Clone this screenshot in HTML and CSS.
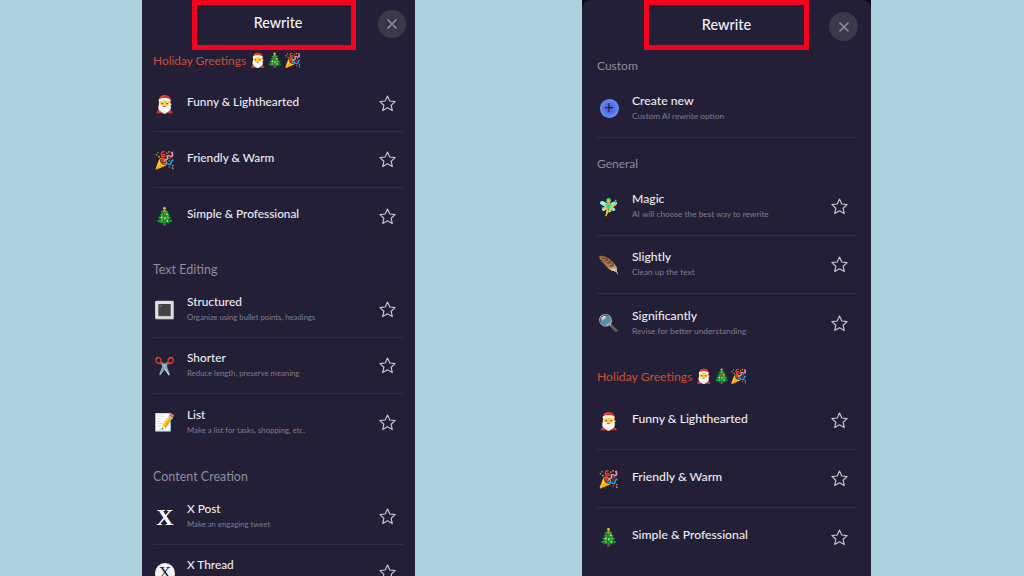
FILE: index.html
```html
<!DOCTYPE html>
<html lang="en">
<head>
  <meta charset="UTF-8">
  <title>Rewrite</title>
  <link rel="stylesheet" href="styles.css">
</head>
<body>
  <svg class="sprite" width="0" height="0">
    <symbol id="star" viewBox="0 0 24 24">
      <path d="M12 2.6l2.9 6.2 6.7.8-5 4.6 1.4 6.7-6-3.4-6 3.4 1.4-6.7-5-4.6 6.7-.8z" fill="none" stroke="currentColor" stroke-width="1.5" stroke-linejoin="round"/>
    </symbol>
    <symbol id="close" viewBox="0 0 12 12">
      <path d="M1.5 1.5l9 9M10.5 1.5l-9 9" fill="none" stroke="currentColor" stroke-width="1.6"/>
    </symbol>
  </svg>

  <!-- Left sheet -->
  <section class="sheet sheet-left">
    <header class="sheet-header">
      <h1 class="sheet-title">Rewrite</h1>
      <button class="close-button"><svg class="close-icon"><use href="#close"/></svg></button>
    </header>

    <h2 class="group-title group-title-holiday first">Holiday Greetings <span class="emoji">🎅🎄🎉</span></h2>
    <ul class="menu">
      <li class="menu-item"><span class="item-icon">🎅</span><div class="item-text"><div class="item-name">Funny &amp; Lighthearted</div></div><svg class="star"><use href="#star"/></svg></li>
      <li class="menu-item"><span class="item-icon">🎉</span><div class="item-text"><div class="item-name">Friendly &amp; Warm</div></div><svg class="star"><use href="#star"/></svg></li>
      <li class="menu-item last"><span class="item-icon">🎄</span><div class="item-text"><div class="item-name">Simple &amp; Professional</div></div><svg class="star"><use href="#star"/></svg></li>
    </ul>

    <h2 class="group-title">Text Editing</h2>
    <ul class="menu">
      <li class="menu-item"><span class="item-icon">🔳</span><div class="item-text"><div class="item-name">Structured</div><div class="item-desc">Organize using bullet points, headings</div></div><svg class="star"><use href="#star"/></svg></li>
      <li class="menu-item"><span class="item-icon">✂️</span><div class="item-text"><div class="item-name">Shorter</div><div class="item-desc">Reduce length, preserve meaning</div></div><svg class="star"><use href="#star"/></svg></li>
      <li class="menu-item last"><span class="item-icon">📝</span><div class="item-text"><div class="item-name">List</div><div class="item-desc">Make a list for tasks, shopping, etc.</div></div><svg class="star"><use href="#star"/></svg></li>
    </ul>

    <h2 class="group-title group-title-content">Content Creation</h2>
    <ul class="menu">
      <li class="menu-item"><span class="item-icon x-icon">X</span><div class="item-text"><div class="item-name">X Post</div><div class="item-desc">Make an engaging tweet</div></div><svg class="star"><use href="#star"/></svg></li>
      <li class="menu-item"><span class="item-icon"><span class="thread-icon">X</span></span><div class="item-text"><div class="item-name">X Thread</div><div class="item-desc"></div></div><svg class="star"><use href="#star"/></svg></li>
    </ul>
  </section>

  <!-- Right sheet, black phone edge shows behind its round corners -->
  <div class="sheet-frame">
    <section class="sheet sheet-right">
      <header class="sheet-header">
        <h1 class="sheet-title">Rewrite</h1>
        <button class="close-button"><svg class="close-icon"><use href="#close"/></svg></button>
      </header>

      <h2 class="group-title first">Custom</h2>
      <ul class="menu">
        <li class="menu-item"><span class="item-icon"><span class="plus-icon">+</span></span><div class="item-text"><div class="item-name">Create new</div><div class="item-desc">Custom AI rewrite option</div></div></li>
      </ul>

      <h2 class="group-title">General</h2>
      <ul class="menu">
        <li class="menu-item"><span class="item-icon">🧚‍♂️</span><div class="item-text"><div class="item-name">Magic</div><div class="item-desc">AI will choose the best way to rewrite</div></div><svg class="star"><use href="#star"/></svg></li>
        <li class="menu-item"><span class="item-icon">🪶</span><div class="item-text"><div class="item-name">Slightly</div><div class="item-desc">Clean up the text</div></div><svg class="star"><use href="#star"/></svg></li>
        <li class="menu-item last"><span class="item-icon">🔍</span><div class="item-text"><div class="item-name">Significantly</div><div class="item-desc">Revise for better understanding</div></div><svg class="star"><use href="#star"/></svg></li>
      </ul>

      <h2 class="group-title group-title-holiday">Holiday Greetings <span class="emoji">🎅🎄🎉</span></h2>
      <ul class="menu">
        <li class="menu-item"><span class="item-icon">🎅</span><div class="item-text"><div class="item-name">Funny &amp; Lighthearted</div></div><svg class="star"><use href="#star"/></svg></li>
        <li class="menu-item"><span class="item-icon">🎉</span><div class="item-text"><div class="item-name">Friendly &amp; Warm</div></div><svg class="star"><use href="#star"/></svg></li>
        <li class="menu-item last"><span class="item-icon">🎄</span><div class="item-text"><div class="item-name">Simple &amp; Professional</div></div><svg class="star"><use href="#star"/></svg></li>
      </ul>
    </section>
  </div>
</body>
</html>
```
FILE: styles.css
```css
* {
  box-sizing: border-box;
}
body {
  margin: 0;
  height: 576px;
  overflow: hidden;
  display: flex;
  align-items: flex-start;
  background-color: #aed1df;
  font-family: "Lato", "Noto Color Emoji", sans-serif;
}
.sprite {
  display: block;
  width: 0;
  height: 0;
}
h1,
h2,
ul {
  margin: 0;
  padding: 0;
  font-weight: normal;
}
ul {
  list-style: none;
}

.sheet {
  height: 576px;
  overflow: hidden;
  flex: none;
  background-color: #231f36;
}
.sheet-left {
  --row: 56px;
  --name-size: 11.8px;
  --desc-size: 7.75px;
  --group-size: 12.5px;
  --holiday-size: 11.9px;
  width: 273px;
  margin-left: 142px;
  padding: 0 11px;
}
.sheet-frame {
  flex: none;
  width: 289px;
  height: 576px;
  margin-left: 167px;
  background-color: #0d0b14;
}
.sheet-right {
  --row: 58px;
  --name-size: 12.2px;
  --desc-size: 8.3px;
  --group-size: 12px;
  --holiday-size: 12.2px;
  padding: 0 15px;
  border-radius: 9px 9px 0 0;
}

.sheet-header {
  height: 50px;
  display: flex;
  align-items: flex-start;
}
.sheet-title {
  flex: none;
  border: 5px solid #f5001e;
  width: 164px;
  height: 50px;
  margin-left: 39px;
  padding: 9px 0 0 8px;
  text-align: center;
  color: #f4f3f6;
  font-size: 14.3px;
  font-weight: 500;
}
.sheet-right .sheet-title {
  width: 165px;
  margin-left: 47px;
  padding: 11px 0 0;
  font-size: 14.5px;
}
.close-button {
  flex: none;
  margin: 10px 0 0 22px;
  width: 28px;
  height: 28px;
  padding: 0;
  border: none;
  border-radius: 50%;
  background-color: #3b3849;
  color: #8d8b97;
  display: flex;
  align-items: center;
  justify-content: center;
}
.sheet-right .close-button {
  margin: 12px 0 0 20px;
  width: 29px;
  height: 29px;
}
.close-icon {
  width: 12px;
  height: 12px;
}

.group-title {
  height: 18px;
  line-height: 18px;
  margin-top: 17px;
  color: #8f8c9b;
  font-size: var(--group-size);
}
.group-title.first {
  margin-top: 1px;
}
.group-title-content {
  margin-top: 18px;
}
.sheet-right .group-title {
  margin-top: 17px;
}
.sheet-right .group-title.first {
  margin-top: 7px;
}
.sheet-right .group-title-holiday {
  margin-top: 15px;
}
.group-title-holiday {
  color: #c9503a;
  font-size: var(--holiday-size);
}
.emoji {
  font-size: 14px;
}

.menu {
  margin-top: 3px;
}
.sheet-right .menu {
  margin-top: 5px;
}
.group-title-holiday + .menu {
  margin-top: 7px;
}
.sheet-right .group-title-holiday + .menu {
  margin-top: 7px;
}
.menu-item {
  height: var(--row);
  display: flex;
  align-items: center;
  border-bottom: 1px solid #322e45;
  padding: 0 7px 0 1px;
}
.menu-item.last {
  border-bottom: none;
}
.item-icon {
  width: 22px;
  flex: none;
  margin-right: 11px;
  font-size: 17px;
  line-height: 20px;
  text-align: center;
  color: #fff;
}
.sheet-right .item-icon {
  margin-right: 12px;
}
.x-icon {
  font-family: "Liberation Serif", serif;
  font-size: 24px;
  font-weight: bold;
}
.thread-icon {
  display: block;
  width: 20px;
  height: 20px;
  margin: 0 auto;
  border-radius: 50%;
  background-color: #f4f3f6;
  color: #231f36;
  font-family: "Liberation Serif", serif;
  font-size: 17px;
  line-height: 20px;
}
.plus-icon {
  display: block;
  width: 19px;
  height: 19px;
  margin: -1px auto 0;
  border-radius: 50%;
  background: radial-gradient(circle, #5566ea 30%, #74b0fa 100%);
  color: #231f36;
  font-size: 17px;
  line-height: 18px;
}
.item-text {
  flex: 1;
  min-width: 0;
}
.item-name {
  color: #eeedf1;
  font-size: var(--name-size);
  font-weight: 500;
  line-height: 16px;
  margin-top: -4px;
}
.item-name:not(:last-child) {
  margin-top: -2px;
}
.item-desc {
  min-height: 11px;
  color: #807d8d;
  font-size: var(--desc-size);
  line-height: 11px;
  margin-top: 2px;
}
.star {
  width: 19px;
  height: 19px;
  flex: none;
  color: #c5c4cb;
}
```
